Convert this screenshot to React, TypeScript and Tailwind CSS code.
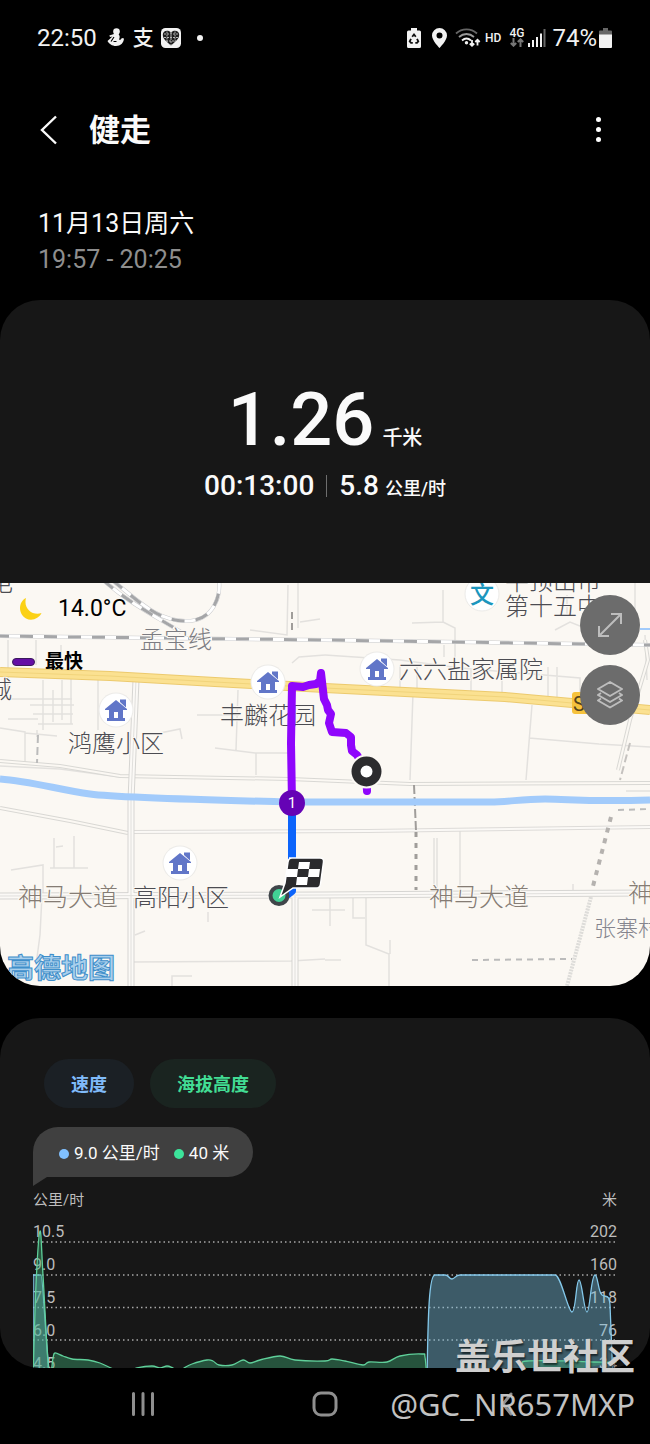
import React from "react";

// Puntos de la altitud en el área del gráfico (584 x 165)
const ALTITUD: number[][][] = [
  [[0, 165], [3, 70], [7, 16], [10, 60], [16, 160], [20, 143], [22, 138], [30, 141], [39, 144], [55, 145], [67, 148], [78, 153], [90, 158], [104, 153], [119, 151], [127, 153], [134, 151], [140, 153], [146, 156], [151, 153], [159, 149], [174, 145], [180, 146], [186, 150], [199, 150], [210, 145], [217, 148], [227, 145], [247, 141], [262, 145], [292, 146], [299, 144], [312, 146], [330, 150], [336, 147], [354, 147], [367, 141], [389, 139], [392, 142], [394, 165]],
  [[482, 165], [489, 150], [494, 146], [535, 146], [560, 147], [584, 147]],
];

const VELOCIDAD_INICIO = "M0 165V60H8C10 60 12 120 17 165";
const VELOCIDAD =
  "M394 165C395 100 396 60 402 60H412C416 60 416 64 419 64S422 60 427 60H522C528 60 535 97 539 97S543 65 546 65S551 97 554 97S558 60 562 60C565 60 565 77 569 80S576 78 577 90L580 165";

// Curva suave que pasa por todos los puntos
const curva = (p: number[][]) =>
  p.reduce((d, [x, y], i) => {
    if (i === 0) return `M${x} ${y}`;
    const [x0, y0] = p[i - 1];
    const [xa, ya] = p[i - 2] || p[i - 1];
    const [xb, yb] = p[i + 1] || p[i];
    return `${d}C${x0 + (x - xa) / 6} ${y0 + (y - ya) / 6} ${x - (xb - x0) / 6} ${y - (yb - y0) / 6} ${x} ${y}`;
  }, "");

const EJES = [
  ["10.5", "202"],
  ["9.0", "160"],
  ["7.5", "118"],
  ["6.0", "76"],
  ["4.5", "34"],
];

const CASAS = [
  [268, 682],
  [116, 710],
  [377, 669],
  [180, 863],
];

const ETIQUETAS: { texto: string; x: number; y: number; clase: string }[] = [
  { texto: "电", x: -11, y: 591, clase: "fill-[#4c4c52] text-[24px]" },
  { texto: "城", x: -12, y: 698, clase: "fill-[#4c4c52] text-[24px]" },
  { texto: "孟宝线", x: 140, y: 648, clase: "fill-[#7c7c82] text-[24px]" },
  { texto: "鸿鹰小区", x: 68, y: 752, clase: "fill-[#4c4c52] text-[24px]" },
  { texto: "丰麟花园", x: 220, y: 724, clase: "fill-[#4c4c52] text-[24px]" },
  { texto: "六六盐家属院", x: 399, y: 678, clase: "fill-[#4c4c52] text-[24px]" },
  { texto: "平顶山市", x: 505, y: 590, clase: "fill-[#4c4c52] text-[24px]" },
  { texto: "第十五中", x: 505, y: 615, clase: "fill-[#4c4c52] text-[24px]" },
  { texto: "高阳小区", x: 133, y: 906, clase: "fill-[#4c4c52] text-[24px]" },
  { texto: "神马大道", x: 18, y: 906, clase: "fill-[#857c74] text-[25px]" },
  { texto: "神马大道", x: 429, y: 906, clase: "fill-[#857c74] text-[25px]" },
  { texto: "神马大道", x: 628, y: 902, clase: "fill-[#857c74] text-[25px]" },
  { texto: "张寨村", x: 594, y: 936, clase: "fill-[#85858e] text-[22px]" },
];

const BarraEstado: React.FC = () => (
  <div className="flex h-[75px] items-center justify-between pl-[37px] pr-[38px] text-2xl text-[#f2f2f2]">
    <div className="flex items-center">
      <span>22:50</span>
      <svg className="ml-2.5" width="18" height="20" viewBox="0 0 18 20" fill="currentColor">
        <circle cx="9.500" cy="3.500" r="3.300" />
        <path d="M7 6h4.500c1.500 2 1.500 3.500.5 5.500 1 1 2.300-.2 2.800-1.500l2.200.5c-.3 4.500-3.500 7.500-8 7.500-4 0-7-2.300-8.500-5l5-4.500L3 9 2.300 7.500z" />
        <path d="M7 9l-3 4.500M6.500 13.500h3" stroke="#000" strokeWidth="1.200" />
      </svg>
      <span className="ml-2 text-[21px] font-medium leading-6">支</span>
      <svg className="ml-[7px]" width="20" height="20" viewBox="0 0 20 20">
        <rect width="20" height="20" rx="4.500" fill="#f2f2f2" />
        <path d="M10 17.500C5 13.500 1.800 10.500 1.800 6.800 1.800 2.500 7.500 1.500 10 4.800c2.500-3.300 8.200-2.300 8.200 2 0 3.700-3.200 6.700-8.200 10.700z" fill="#1d1d1d" />
        <path d="M3 6h14M3 9.500h14M5 13h10M6 3.500v10.500M10 4v13M14 3.500v10.500" stroke="#b5b5b5" strokeWidth="1" strokeDasharray="2 1" />
      </svg>
      <span className="ml-4 size-1.5 rounded-full bg-[#f2f2f2]" />
    </div>
    <div className="flex items-center">
      <svg width="14" height="20" viewBox="0 0 14 20">
        <path d="M4 0h6v2.500h2.500A1.500 1.500 0 0 1 14 4v14.500a1.500 1.500 0 0 1-1.500 1.500h-11A1.500 1.500 0 0 1 0 18.500V4a1.500 1.500 0 0 1 1.500-1.500H4z" fill="#f2f2f2" />
        <path d="M5.200 8.800L7 6.500l1.800 2.300M10 10.800l1.300 2.500-1.300 1.500H8.300M5.800 14.800H4l-1.300-1.500L4 10.800" fill="none" stroke="#111" strokeWidth="1.800" />
      </svg>
      <svg className="ml-[11px]" width="15" height="20" viewBox="0 0 15 20">
        <path d="M7.500 0A7.500 7.500 0 0 0 0 7.500C0 12.500 7.500 20 7.500 20S15 12.500 15 7.500A7.500 7.500 0 0 0 7.500 0zm0 10.500a3 3 0 1 1 0-6 3 3 0 0 1 0 6z" fill="#f2f2f2" />
      </svg>
      <svg className="ml-2" width="26" height="20" viewBox="0 0 26 20" fill="none" strokeWidth="1.800">
        <path d="M1 5.500c6-5.500 15-5.500 21 0" stroke="#666" />
        <path d="M4 9c4.500-4 10.500-4 15 0" stroke="#999" />
        <path d="M7 12.500c2.800-2.500 6.200-2.500 9 0" stroke="#f2f2f2" />
        <circle cx="11.500" cy="14.800" r="1.700" fill="#f2f2f2" />
        <path d="M17 12v5.500M14.800 15.500l2.200 2.200 2.200-2.200M22.500 17.500v-5.500M20.300 14l2.200-2.200 2.200 2.200" stroke="#f2f2f2" />
      </svg>
      <span className="ml-1 text-xs font-medium">HD</span>
      <span className="ml-2 flex flex-col items-center text-xs font-medium leading-[10px]">
        4G
        <svg width="14" height="9" viewBox="0 0 14 9" fill="none" stroke="#777" strokeWidth="2">
          <path d="M3.500 0v7.500M.8 5l2.700 2.700L6.200 5M10.500 9V1.500M7.800 4l2.700-2.700L13.200 4" />
        </svg>
      </span>
      <svg className="ml-1" width="18" height="18" viewBox="0 0 18 18" fill="#f2f2f2">
        <path d="M0 14h2v4H0zM4 11h2v7H4zM8 8h2v10H8zM12 4.500h2V18h-2z" />
        <path d="M15.500 0h2v18h-2z" fill="#666" />
      </svg>
      <span className="ml-1.5">74%</span>
      <svg className="ml-0.5" width="13" height="20" viewBox="0 0 13 20">
        <path d="M4 0h5v2.500h3a1 1 0 0 1 1 1V7H0V3.500a1 1 0 0 1 1-1h3z" fill="#666" />
        <path d="M0 6.500h13V19a1 1 0 0 1-1 1H1a1 1 0 0 1-1-1z" fill="#f2f2f2" />
      </svg>
    </div>
  </div>
);

const Mapa: React.FC = () => (
  <svg className="block h-full w-full font-light" viewBox="0 583 650 403" preserveAspectRatio="xMidYMid slice">
    <rect x="0" y="583" width="650" height="403" fill="#fbf8f3" />

    {/* Calles menores */}
    <g fill="none" stroke="#e3e1de" strokeWidth="1.500">
      <path d="M8 640v50M36 640v25M61 645v22M98 680v50M10 699h62M8 719h30M30 705h44M33 714h40M43 680v50M53 690v32M62 680v40M71 672v52M38 724h35" />
      <path d="M0 728l25 4v32M25 733l32 3M37 730v7M160 733l20-4 2 10M197 715h42M238 690l-2 60M215 748l40 5h35M256 753v22M292 663l7-6 26-2M250 630l37 5 1-50M298 583v45M300 622l20-3" />
      <path d="M325 655l75 5 60 8 120 10v28M412 623l31-1V590M443 622l12 6v38M400 665v28M417 665v24M471 670v25M502 670v24M548 667v32M557 667v30M413 693l-3 87M532 705l-6 75M529 738l70 6 51 3M444 645v12" />
      <path d="M555 630l15-8 20 8M567 595v20M635 583v40M645 635l2 45" />
      <path d="M0 766l60 3 60 8M11 870l32-5v30M54 838v30M74 836v32M56 847l7-1M50 868h38M42 895l-2 40-4 30M135 935l10-4M131 962l160-1 34-2M172 986v-10h20M208 912v10M312 910h13" />
      <path d="M325 910h20M330 898v28M353 898v20h12M366 898v47l23 9v32M390 940v14M325 960h16M460 831v60M434 838v55M437 838v55M573 884v8M626 791h24" />
    </g>
    <g fill="none" stroke="#d9d8d4" strokeWidth="4">
      <path d="M0 761l60 5 60 10 170 3 120 5 240-1M0 808l70 13 58 12" />
      <path d="M645 640l3 20-18 60-12 50" />
    </g>
    <g fill="none" stroke="#fbf8f3" strokeWidth="2">
      <path d="M0 761l60 5 60 10 170 3 120 5 240-1M0 808l70 13 58 12" />
      <path d="M645 640l3 20-18 60-12 50" />
    </g>
    <path d="M128 832l240-1 282-4" fill="none" stroke="#dddbd8" strokeWidth="4" />
    <path d="M128 832l240-1 282-4" fill="none" stroke="#fbf9f6" strokeWidth="2" />
    <path d="M136 680l-5 120v186M0 896l325-1 325-2M295 896v90" fill="none" stroke="#d6d5d2" strokeWidth="7" />
    <path d="M136 680l-5 120v186M0 896l325-1 325-2M295 896v90" fill="none" stroke="#fbf9f6" strokeWidth="5" />
    <path d="M136 680l-5 120v186M0 896l325-1 325-2M295 896v90" fill="none" stroke="#e0dfdc" strokeWidth="1" />
    <path d="M591 897l-24 89" stroke="#dddcd9" strokeWidth="4" strokeDasharray="2 1" />
    <g fill="none" stroke="#a09d9a" strokeWidth="2">
      <path d="M414 785l2 46" strokeDasharray="9 3" />
      <path d="M416 832v58" strokeWidth="3" strokeDasharray="5 6" />
      <path d="M472 960l100-1" stroke="#bbb" strokeDasharray="6 5" />
      <path d="M618 810l32-1" stroke="#bbb" strokeDasharray="6 5" />
      <path d="M611 817l-19 73" strokeWidth="4" stroke="#b5b2af" strokeDasharray="5 6" />
      <path d="M630 743l-10 37" stroke="#c5c2bf" strokeDasharray="8 4" />
      <path d="M38 735l-1 28" stroke="#bbb" strokeDasharray="8 4" />
      <path d="M292 612v18" strokeDasharray="7 4" />
    </g>

    {/* Río */}
    <path d="M0 779c30 2 60 11 90 15s120 6 200 8h200c20 0 30-3 55-3s40 3 105 1" fill="none" stroke="#a2cbfb" strokeWidth="7" />
    <path d="M640 629h10" stroke="#a2cbfb" strokeWidth="2" />

    {/* Vías de tren */}
    <g fill="none">
      <path d="M0 636l325 4 325 5M103 580c25 22 45 32 78 52M112 580c30 24 45 40 73 41s36-24 34-41" stroke="#c9cacc" strokeWidth="4" />
      <path d="M0 636l325 4 325 5M103 580c25 22 45 32 78 52M112 580c30 24 45 40 73 41s36-24 34-41" stroke="#fff" strokeWidth="3" />
      <path d="M-4 636l329 4 325 5M103 580c25 22 45 32 78 52M112 580c30 24 45 40 73 41s36-24 34-41" stroke="#a5a6a8" strokeWidth="3" strokeDasharray="13 11" />
    </g>

    {/* Carretera principal */}
    <path d="M0 672l110 4 105 6 110 6 180 9 145 13" fill="none" stroke="#ecca6e" strokeWidth="10" />
    <path d="M0 672l110 4 105 6 110 6 180 9 145 13" fill="none" stroke="#fbe191" strokeWidth="8" />
    <path d="M0 672l110 4 105 6 110 6 180 9 145 13" fill="none" stroke="#f1d47c" strokeWidth="1" />

    {CASAS.map(([x, y]) => (
      <g key={`${x}-${y}`} transform={`translate(${x} ${y})`}>
        <circle r="17.500" fill="#ecebe8" />
        <circle r="16.500" fill="#fff" />
        <path d="M0-10L11-1V0H7v8h2v3H-9V8h2V0h-4v-1z" fill="#6176c8" />
        <path d="M3-10h7v8" fill="none" stroke="#fff" />
        <path d="M4-10.500h6v8L4-8z" fill="#6176c8" />
        <path d="M-2 2h4v6h-4z" fill="#fff" />
      </g>
    ))}
    <circle cx="482" cy="594" r="17" fill="#fff" stroke="#ecebe8" />
    <text x="470" y="603" className="fill-[#1c96bd] text-[24px] font-medium">文</text>
    <rect x="572" y="692" width="40" height="22" rx="3" fill="#f6c23c" />
    <text x="573" y="711" className="fill-[#55441c] text-[20px] font-normal">S</text>
    {ETIQUETAS.map((e) => (
      <text key={`${e.texto}-${e.x}`} x={e.x} y={e.y} className={e.clase} stroke="#fbf8f3" strokeWidth="2" paintOrder="stroke">
        {e.texto}
      </text>
    ))}
    <text x="7" y="978" className="fill-[#a9cfec] text-[27px] font-bold" stroke="#3f8fcb" strokeWidth="1">高德地图</text>

    {/* Recorrido */}
    <g fill="none" strokeWidth="8" strokeLinecap="round" strokeLinejoin="round">
      <path d="M292 805v86l-5 4" stroke="#0c64fb" />
      <path d="M292 803l-1-60 1-57 11 1 6-2 7-1 4-3 1-8 3 26 3 6 1 5 3 4-2 9 3 9 14 1 5 4v8l1 6 5 4 9 15 1 21" stroke="#8f06fc" />
    </g>
    <circle cx="366.500" cy="771.500" r="11" fill="#fff" stroke="#fbf8f3" strokeWidth="12" />
    <circle cx="366.500" cy="771.500" r="10.500" fill="#fff" stroke="#2c2c2e" strokeWidth="9" />
    <circle cx="292" cy="803" r="13" fill="#6503b5" />
    <text x="292" y="808" textAnchor="middle" className="fill-white text-[15px] font-normal">1</text>
    <circle cx="279" cy="895.500" r="8.500" fill="#41d295" stroke="#40464a" strokeWidth="4" />
    <path d="M289 858h31q4 0 3.500 4l-3 22q-.5 4-4.500 4h-23l-13 9 5-14 3-21q.5-4 4-4z" fill="#2b2b2d" stroke="#fff" strokeWidth="1.500" />
    <path d="M299 862h11l-1 7h-11zM287 869h11l-1 8h-11zM309 869h11l-1 8h-11zM297 877h11l-1 8h-11z" fill="#fff" />
  </svg>
);

const Grafico: React.FC = () => (
  <div className="relative text-base leading-[33px] text-[#bdbdbd]">
    {EJES.map(([izq, der]) => (
      <div key={izq} className="flex justify-between">
        <span>{izq}</span>
        <span>{der}</span>
      </div>
    ))}
    <svg className="absolute inset-0 h-full w-full" viewBox="0 0 584 165" preserveAspectRatio="none" fill="none">
      <path d="M0 27h584M0 60h584M0 92.500h584M0 125h584" stroke="#a8a8a8" strokeWidth="1.500" strokeDasharray="1.500 3" />
      <g stroke="#84c8ea" strokeWidth="1.300" fill="#79c4e4" fillOpacity=".4">
        <path d={VELOCIDAD_INICIO} />
        <path d={VELOCIDAD} />
      </g>
      <g stroke="#5fd09a" strokeWidth="1.300" fill="#3fae78" fillOpacity=".4">
        {ALTITUD.map((p, i) => (
          <path key={i} d={curva(p)} />
        ))}
      </g>
    </svg>
  </div>
);

export default function App() {
  return (
    <div className="relative min-h-screen overflow-hidden bg-black font-['Roboto','Noto_Sans_CJK_SC',sans-serif] text-[#fafafa]">
      <BarraEstado />

      <header className="flex h-28 items-center justify-between pl-9 pr-[42px]">
        <div className="flex items-center">
          <button aria-label="返回" className="flex w-[53px]">
            <svg width="24" height="32" viewBox="0 0 24 32" fill="none" stroke="currentColor" strokeWidth="2.400">
              <path d="M20 1.500L6 15 20 28.500" />
            </svg>
          </button>
          <h1 className="text-[31px] font-bold leading-9">健走</h1>
        </div>
        <button aria-label="更多选项" className="flex w-5 flex-col items-center gap-[5px] pb-1">
          <span className="size-[5px] rounded-full bg-white" />
          <span className="size-[5px] rounded-full bg-white" />
          <span className="size-[5px] rounded-full bg-white" />
        </button>
      </header>

      <div className="px-[38px] pb-[22px] pt-[19px] text-[25px] leading-9">
        <p>11月13日周六</p>
        <p className="text-[#8e8e8e]">19:57 - 20:25</p>
      </div>

      <main>
        <section className="overflow-hidden rounded-[40px] bg-[#171717]">
          <div className="flex h-[283px] flex-col items-center pt-[78px]">
            <p className="flex items-baseline gap-2 text-[74px] font-medium leading-[84px]">
              1.26 <span className="text-xl">千米</span>
            </p>
            <div className="mt-1 flex items-center text-[28px] font-medium leading-10">
              <span>00:13:00</span>
              <span className="mx-3 h-[22px] w-px bg-[#6e6e6e]" />
              <span className="flex items-baseline gap-1.5">
                5.8 <span className="text-lg">公里/时</span>
              </span>
            </div>
          </div>

          <div className="relative h-[403px]">
            <Mapa />
            <div className="absolute left-3 top-[9px] text-black">
              <div className="flex items-center gap-4 pl-2">
                <svg width="22" height="22" viewBox="0 0 22 22">
                  <path d="M6 0C-2 4-2 16 6 20.500c6 3 13 0 15.500-5.500C13 18 3 11 6 0z" fill="#fbd116" />
                </svg>
                <span className="text-[23px] leading-[34px]">14.0°C</span>
              </div>
              <div className="mt-[22px] flex items-center gap-2.5">
                <span className="h-2 w-[23px] rounded-full border border-[#3c1a5c] bg-[#650fa5]" />
                <span className="text-[19px] font-bold leading-7">最快</span>
              </div>
            </div>
            <div className="absolute right-2.5 top-3 flex flex-col gap-2.5">
              <button aria-label="放大地图" className="flex size-[60px] items-center justify-center rounded-full bg-[#6c6c6c]">
                <svg width="26" height="26" viewBox="0 0 26 26" fill="none" stroke="#bdbdbd" strokeWidth="2">
                  <path d="M2 24L24 2M14 2h10v10M2 14v10h10" />
                </svg>
              </button>
              <button aria-label="图层" className="flex size-[60px] items-center justify-center rounded-full bg-[#6c6c6c]">
                <svg width="28" height="28" viewBox="0 0 28 28" fill="none" stroke="#bdbdbd" strokeWidth="2" strokeLinejoin="round">
                  <path d="M14 1l12 7-12 7L2 8zM5 12l-3 2 12 7 12-7-3-2M5 17.500l-3 2 12 7 12-7-3-2" />
                </svg>
              </button>
            </div>
          </div>
        </section>

        <section className="mt-8 h-[350px] overflow-hidden rounded-[40px] bg-[#171717] px-[33px] pt-[41px]">
          <div className="flex gap-4 pl-[11px] text-lg font-bold">
            <button className="h-[49px] rounded-full bg-[#1b2025] px-[27px] pt-0.5 text-[#80bbfa]">速度</button>
            <button className="h-[49px] rounded-full bg-[#1a2420] px-[27px] pt-0.5 text-[#42dd94]">海拔高度</button>
          </div>

          <div className="relative mt-[19px] flex h-[50px] w-fit items-center rounded-[25px] rounded-bl-none bg-[#404040] pl-[26px] pr-6 pt-1 text-[17px]">
            <span className="mr-[5px] size-2.5 rounded-full bg-[#80c0ff]" />
            9.0 公里/时
            <span className="ml-3.5 mr-[5px] size-2.5 rounded-full bg-[#3ce49b]" />
            40 米
            <svg className="absolute left-0 top-full" width="14" height="10" viewBox="0 0 14 10">
              <path d="M0 0h14L0 9z" fill="#404040" />
            </svg>
          </div>

          <div className="mt-3 flex justify-between text-[15px] leading-[22px] text-[#bdbdbd]">
            <span>公里/时</span>
            <span>米</span>
          </div>
          <div className="mt-1">
            <Grafico />
          </div>
        </section>
      </main>

      <nav className="grid h-[76px] grid-cols-3 items-center justify-items-center px-[52px] pb-1 text-[#8f8f8f]">
        <button aria-label="最近">
          <svg width="24" height="26" viewBox="0 0 24 26" fill="none" stroke="currentColor" strokeWidth="3" strokeLinecap="round">
            <path d="M2.500 2.500v21M12 2.500v21M21.500 2.500v21" />
          </svg>
        </button>
        <button aria-label="主页">
          <svg width="28" height="28" viewBox="0 0 28 28" fill="none" stroke="currentColor" strokeWidth="3">
            <rect x="3" y="3" width="22" height="22" rx="7" />
          </svg>
        </button>
        <button aria-label="后退">
          <svg width="14" height="24" viewBox="0 0 14 24" fill="none" stroke="currentColor" strokeWidth="3" strokeLinecap="round">
            <path d="M11 2L3 12l8 10" />
          </svg>
        </button>
      </nav>

      {/* Marca de agua sobre la captura */}
      <div className="pointer-events-none absolute bottom-[18px] right-[15px] flex flex-col items-end text-[#cfcfcf]">
        <span className="text-4xl font-bold leading-[48px] [text-shadow:1px_2px_2px_rgba(0,0,0,0.6)]">盖乐世社区</span>
        <span className="font-['Noto_Sans','Open_Sans',sans-serif] text-[31px] leading-[44px] text-[#c2c2c2]">@GC_NR657MXP</span>
      </div>
    </div>
  );
}
